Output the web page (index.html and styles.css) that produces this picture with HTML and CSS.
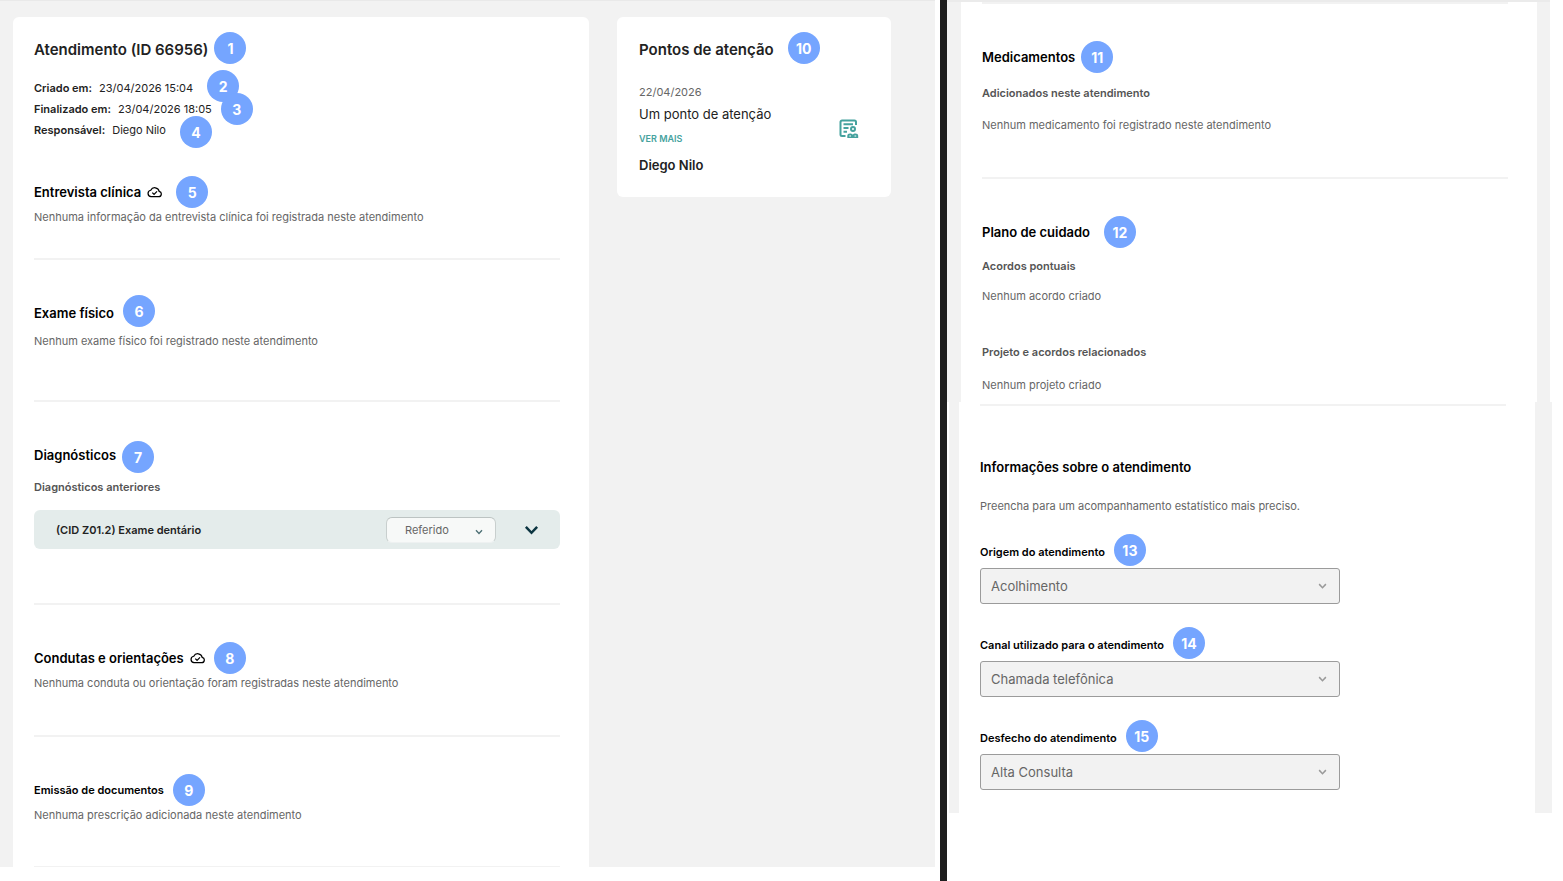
FILE: index.html
```html
<!DOCTYPE html>
<html lang="pt-BR">
<head>
  <meta charset="UTF-8" />
  <meta name="viewport" content="width=device-width, initial-scale=1" />
  <title>Atendimento</title>
  <link rel="stylesheet" href="styles.css">
</head>
<body>
  <svg class="sprite" aria-hidden="true">
    <symbol id="icon-cloud" viewBox="0 0 24 18">
      <path d="M6.5 16.5h12a4.3 4.3 0 0 0 1-8.5A7.2 7.2 0 0 0 6 6.2a5.2 5.2 0 0 0 .5 10.3z" />
      <path d="M8.5 10l2.800 2.800L16 8" />
    </symbol>
    <symbol id="icon-chevron" viewBox="0 0 12 8">
      <path d="M1.5 1.5L6 6.2l4.5-4.7" />
    </symbol>
    <symbol id="icon-group-note" viewBox="0 0 20 20">
      <path d="M6.500 17H3A1.500 1.500 0 0 1 1.500 15.500V3A1.500 1.500 0 0 1 3 1.500h12.500A1.500 1.500 0 0 1 17 3v3" />
      <path d="M4.500 5.300h9.500M4.500 9h5M4.500 12.700h3.500" />
      <circle cx="14" cy="10" r="2" />
      <path class="solid" d="M8.300 19v-2.300c0-1.500 1.200-2.300 2.700-2.300 1.200 0 2 .4 2.700 1.100.7-.7 1.500-1.100 2.700-1.100 1.600 0 2.800.8 2.800 2.300V19z" />
      <path class="hole" d="M10.300 17h1.700M15.500 17h1.700" />
    </symbol>
  </svg>

  <main class="panel panel-left">
    <article class="card">
      <header class="card-header">
        <h1 class="card-title">Atendimento (ID 66956) <span class="pin pin-near pin-up">1</span></h1>
        <dl class="meta">
          <div class="meta-row"><dt>Criado em:</dt><dd>23/04/2026 15:04</dd><dd class="pin pin-far pin-up">2</dd></div>
          <div class="meta-row"><dt>Finalizado em:</dt><dd>23/04/2026 18:05</dd><dd class="pin">3</dd></div>
          <div class="meta-row"><dt>Responsável:</dt><dd>Diego Nilo</dd><dd class="pin pin-far pin-down">4</dd></div>
        </dl>
      </header>

      <section class="section interview">
        <h2 class="heading">Entrevista clínica <svg class="cloud"><use href="#icon-cloud" /></svg> <span class="pin pin-far">5</span></h2>
        <p class="text">Nenhuma informação da entrevista clínica foi registrada neste atendimento</p>
      </section>

      <section class="section exam">
        <h2 class="heading">Exame físico <span class="pin pin-up">6</span></h2>
        <p class="text">Nenhum exame físico foi registrado neste atendimento</p>
      </section>

      <section class="section diagnoses">
        <h2 class="heading">Diagnósticos <span class="pin pin-near pin-down">7</span></h2>
        <h3 class="subheading">Diagnósticos anteriores</h3>
        <div class="diagnosis">
          <span class="diagnosis-name">(CID Z01.2) Exame dentário</span>
          <div class="select-wrap status">
            <select aria-label="Situação do diagnóstico">
              <option>Referido</option>
            </select>
            <svg class="arrow"><use href="#icon-chevron" /></svg>
          </div>
          <button type="button" class="expand" aria-label="Expandir diagnóstico">
            <svg><use href="#icon-chevron" /></svg>
          </button>
        </div>
      </section>

      <section class="section conducts">
        <h2 class="heading">Condutas e orientações <svg class="cloud"><use href="#icon-cloud" /></svg> <span class="pin">8</span></h2>
        <p class="text">Nenhuma conduta ou orientação foram registradas neste atendimento</p>
      </section>

      <section class="section documents">
        <h2 class="heading small">Emissão de documentos <span class="pin">9</span></h2>
        <p class="text">Nenhuma prescrição adicionada neste atendimento</p>
      </section>
    </article>

    <aside class="card attention">
      <h2 class="card-title">Pontos de atenção <span class="pin pin-far pin-up">10</span></h2>
      <div class="attention-item">
        <div class="attention-body">
          <time class="attention-date" datetime="2026-04-22">22/04/2026</time>
          <p class="attention-text">Um ponto de atenção</p>
          <a class="more" href="#">VER MAIS</a>
          <p class="attention-author">Diego Nilo</p>
        </div>
        <svg class="group-note"><use href="#icon-group-note" /></svg>
      </div>
    </aside>
  </main>

  <div class="divider"></div>

  <div class="column-right">
    <div class="panel panel-top">
      <div class="sheet">
        <section class="section medicines">
          <h2 class="heading">Medicamentos <span class="pin pin-near">11</span></h2>
          <h3 class="subheading">Adicionados neste atendimento</h3>
          <p class="text">Nenhum medicamento foi registrado neste atendimento</p>
        </section>

        <section class="section care-plan">
          <h2 class="heading">Plano de cuidado <span class="pin pin-far">12</span></h2>
          <h3 class="subheading">Acordos pontuais</h3>
          <p class="text">Nenhum acordo criado</p>
          <h3 class="subheading projects">Projeto e acordos relacionados</h3>
          <p class="text">Nenhum projeto criado</p>
        </section>
      </div>
    </div>

    <div class="panel panel-bottom">
      <form class="sheet">
        <h2 class="heading form-title">Informações sobre o atendimento</h2>
        <p class="text">Preencha para um acompanhamento estatístico mais preciso.</p>

        <div class="field">
          <div class="field-label"><label for="origem">Origem do atendimento</label><span class="pin pin-up">13</span></div>
          <div class="select-wrap">
            <select id="origem" disabled>
              <option>Acolhimento</option>
            </select>
            <svg class="arrow"><use href="#icon-chevron" /></svg>
          </div>
        </div>

        <div class="field">
          <div class="field-label"><label for="canal">Canal utilizado para o atendimento</label><span class="pin pin-up">14</span></div>
          <div class="select-wrap">
            <select id="canal" disabled>
              <option>Chamada telefônica</option>
            </select>
            <svg class="arrow"><use href="#icon-chevron" /></svg>
          </div>
        </div>

        <div class="field">
          <div class="field-label"><label for="desfecho">Desfecho do atendimento</label><span class="pin pin-up">15</span></div>
          <div class="select-wrap">
            <select id="desfecho" disabled>
              <option>Alta Consulta</option>
            </select>
            <svg class="arrow"><use href="#icon-chevron" /></svg>
          </div>
        </div>
      </form>
    </div>
  </div>
</body>
</html>
```
FILE: styles.css
```css
* {
  box-sizing: border-box;
}

body {
  margin: 0;
  min-height: 100vh;
  display: grid;
  grid-template-columns: 935fr 12px 604fr;
  align-items: start;
  padding-right: 12px;
  background-color: #fff;
  color: #222;
  font-family: Inter, "Liberation Sans", sans-serif;
  font-size: 11px;
  line-height: 20px;
}

h1, h2, h3, p, dl, dd {
  margin: 0;
}

svg {
  fill: none;
  stroke: currentColor;
  flex: none;
}

.sprite {
  position: absolute;
  width: 0;
  height: 0;
}

/* panels */
.panel {
  background-color: #f2f2f2;
}

.panel-left {
  display: grid;
  grid-template-columns: 576fr 274fr;
  align-items: start;
  gap: 28px;
  padding: 16px 44px 0 13px;
  border-top: 1px solid #e9e9e9;
}

.divider {
  align-self: stretch;
  margin-left: 5px;
  background-color: #1e1e1e;
}

.panel-top {
  margin-right: 1px;
  padding: 0 13px 0 14px;
  border-top: 2px solid #ebebeb;
}

.panel-bottom {
  margin-left: 2px;
  margin-right: -1px;
  padding: 0 17px 0 10px;
}

.sheet {
  padding: 0 29px 0 21px;
  background-color: #fff;
}

/* cards */
.card {
  padding: 23px 29px 0 21px;
  background-color: #fff;
  border-radius: 6px 6px 0 0;
}

.card-title {
  display: flex;
  align-items: center;
  font-size: 15px;
  font-weight: 600;
}

.meta {
  margin-top: 17px;
}

.meta-row {
  display: flex;
  align-items: center;
  height: 21px;
}

.meta dt {
  margin-right: 7px;
  font-weight: 600;
}

/* numbered markers */
.pin {
  position: relative;
  flex: none;
  width: 32px;
  height: 32px;
  margin: -6px 0 -6px 9px;
  border-radius: 50%;
  background-color: #75a5ff;
  color: #fff;
  font-size: 14px;
  font-weight: 700;
  line-height: 34px;
  text-align: center;
}

.pin-near {
  margin-left: 6px;
}

.pin-far {
  margin-left: 14px;
}

.pin-up {
  top: -2px;
}

.pin-down {
  top: 2px;
}

/* sections */
.section {
  padding-top: 43px;
  border-bottom: 2px solid #f2f2f2;
}

.heading {
  display: flex;
  align-items: center;
  margin-bottom: 5px;
  color: #000;
  font-size: 13px;
  font-weight: 600;
}

.heading.small {
  font-size: 11px;
}

.subheading {
  color: #555;
  font-size: 11px;
  font-weight: 600;
}

.text {
  color: #666;
}

.cloud {
  width: 15px;
  height: 12px;
  margin-left: 6px;
  stroke-width: 2;
}

.interview {
  padding-top: 42px;
  padding-bottom: 31px;
}

.exam {
  padding-bottom: 49px;
}

.exam .heading {
  margin-bottom: 8px;
}

.diagnoses {
  padding-bottom: 54px;
}

.diagnoses .heading {
  margin-bottom: 12px;
}

.conducts {
  padding-bottom: 42px;
}

.documents {
  padding-bottom: 41px;
  border-bottom-width: 1px;
}

.diagnosis {
  display: flex;
  align-items: center;
  height: 39px;
  margin-top: 13px;
  padding: 0 21px 0 22px;
  border-radius: 6px;
  background-color: #e4eceb;
}

.diagnosis-name {
  flex: 1;
  font-weight: 600;
}

/* selects */
.select-wrap {
  position: relative;
  max-width: 360px;
}

select {
  display: block;
  width: 100%;
  height: 36px;
  padding: 0 32px 0 10px;
  appearance: none;
  border: 1px solid #9b9b9b;
  border-radius: 3px;
  background-color: #f2f2f2;
  color: #666;
  font-family: inherit;
  font-size: 13px;
  opacity: 1;
}

.arrow {
  position: absolute;
  top: 15px;
  right: 13px;
  width: 9px;
  height: 6px;
  color: #999;
  stroke-width: 2;
  pointer-events: none;
}

.status {
  width: 110px;
}

.status select {
  height: 26px;
  padding: 0 24px 0 18px;
  border-color: #bcc3c2 #c8cfce #eef1f1;
  border-radius: 6px;
  background-color: #f7f9f8;
  font-size: 11px;
}

.status .arrow {
  top: 12px;
  width: 8px;
  color: #4c6f74;
}

.expand {
  display: flex;
  margin-left: 28px;
  padding: 0;
  border: none;
  background: none;
  color: #0b3440;
  cursor: pointer;
}

.expand svg {
  width: 15px;
  height: 10px;
  stroke-width: 2;
}

/* attention points */
.attention {
  padding: 23px 22px 21px;
  border-radius: 6px;
}

.attention-item {
  display: flex;
  align-items: center;
  justify-content: space-between;
  margin-top: 21px;
  padding-right: 10px;
  line-height: 22px;
}

.attention-date {
  display: block;
  color: #666;
}

.attention-text {
  font-size: 13px;
}

.more {
  display: block;
  margin: 3px 0 4px;
  color: #45a29e;
  font-size: 9px;
  font-weight: 600;
  text-decoration: none;
}

.attention-author {
  font-size: 13px;
  font-weight: 600;
}

.group-note {
  width: 20px;
  height: 20px;
  color: #45a29e;
  stroke-width: 2;
}

.solid {
  fill: currentColor;
  stroke: none;
}

.hole {
  stroke: #fff;
  stroke-width: 1;
}

/* medicines and care plan */
.medicines {
  padding-top: 0;
  padding-bottom: 42px;
}

.medicines .heading {
  margin-bottom: 16px;
  padding-top: 43px;
  border-top: 2px solid #f2f2f2;
}

.medicines .subheading {
  margin-bottom: 12px;
}

.care-plan {
  padding-bottom: 7px;
  border-bottom: none;
}

.care-plan .heading {
  margin-bottom: 14px;
}

.care-plan .subheading {
  margin-bottom: 10px;
}

.care-plan .projects {
  margin-top: 36px;
  margin-bottom: 13px;
}

/* attendance form */
.panel-bottom .sheet {
  padding-top: 2px;
  padding-bottom: 23px;
}

.form-title {
  margin-bottom: 19px;
  padding-top: 51px;
  border-top: 2px solid #f2f2f2;
}

.field {
  margin-top: 31px;
}

.text + .field {
  margin-top: 26px;
}

.field-label {
  display: flex;
  align-items: center;
  margin-bottom: 6px;
  color: #000;
  font-weight: 600;
}
```
